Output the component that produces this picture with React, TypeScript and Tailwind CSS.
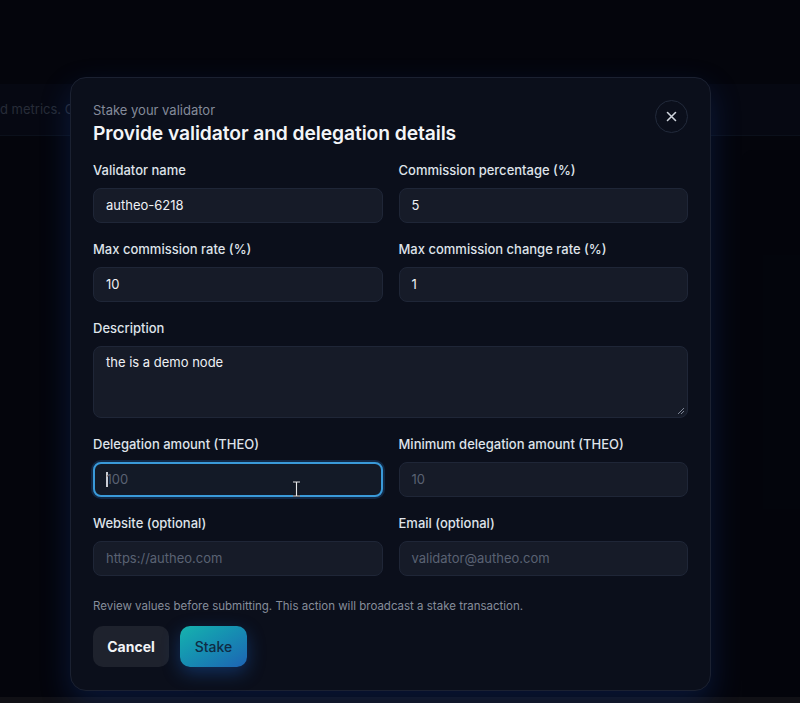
import React from "react";

function Field({
  label,
  value,
  placeholder,
  focused,
}: {
  label: string;
  value?: string;
  placeholder?: string;
  focused?: boolean;
}) {
  return (
    <div className="flex flex-col">
      <label className="mb-2 h-5 text-[13px] leading-5 font-medium text-[#dfe3ea]">{label}</label>
      <div
        className={
          focused
            ? "relative flex h-[35px] items-center rounded-[8px] border-2 border-[#3a9ad9] bg-[#131a27] px-[11px] shadow-[0_0_0_2px_rgba(40,120,200,0.25)]"
            : "flex h-[35px] items-center rounded-[8px] border border-[#1f2637] bg-[#161b28] px-3"
        }
      >
        {value ? (
          <span className="text-[13px] text-[#eef1f5]">{value}</span>
        ) : (
          <span className="flex items-center text-[13px] text-[#5a6273]">
            {focused && <span className="mr-[-1px] inline-block h-[15px] w-[1.5px] bg-[#c9ced6]" />}
            {placeholder}
          </span>
        )}
        {focused && (
          <svg
            className="absolute left-[197px] top-[17px]"
            width="9"
            height="16"
            viewBox="0 0 9 16"
          >
            <path d="M1 1h7M4.5 1v14M1 15h7" stroke="#0b0f18" strokeWidth="3" fill="none" />
            <path d="M1 1h7M4.5 1v14M1 15h7" stroke="#e6e8ec" strokeWidth="1.2" fill="none" />
          </svg>
        )}
      </div>
    </div>
  );
}

export default function App() {
  return (
    <div
      className="relative flex h-[703px] w-[800px] flex-col overflow-hidden bg-[#05070f]"
      style={{ fontFamily: "Inter, 'Noto Sans', sans-serif" }}
    >
      {/* page underneath */}
      <div className="flex flex-1 flex-col pt-[84px]">
        <div className="flex h-[52px] items-center border-b border-[#101826] bg-[#080c17]">
          <span className="whitespace-nowrap text-[13px] text-[#3b4252]">d metrics. C</span>
        </div>
        <div className="flex flex-1 pl-[742px] pt-[14px]">
          <div className="flex-1 rounded-tl-[10px] bg-[#04060d]" />
        </div>
      </div>
      <div className="h-[6px] bg-[#17181c]" />

      {/* overlay */}
      <div className="absolute inset-0 bg-[rgba(2,4,10,0.35)] pl-[70px] pt-[77px]">
        <div className="w-[641px] rounded-[16px] border border-[#1b2131] bg-[#0b0f1b] px-[22px] pb-[23px] pt-[23px] shadow-[0_12px_30px_rgba(20,70,170,0.28)]">
          <div className="relative">
            <div className="h-[18px] text-[13px] leading-[18px] text-[#848b9a]">Stake your validator</div>
            <div className="h-[28px] text-[19.3px] leading-[28px] font-semibold tracking-[-0.1px] text-[#f3f5f8]">
              Provide validator and delegation details
            </div>
            <button className="absolute right-0 top-[-1px] flex h-[33px] w-[33px] items-center justify-center rounded-full border border-[#222a3b] bg-[#0b0f1b]">
              <svg width="11" height="11" viewBox="0 0 11 11">
                <path d="M1.5 1.5l8 8M9.5 1.5l-8 8" stroke="#cfd4dc" strokeWidth="1.6" strokeLinecap="round" />
              </svg>
            </button>
          </div>

          <div className="mt-[13px] grid grid-cols-2 gap-x-4 gap-y-4">
            <Field label="Validator name" value="autheo-6218" />
            <Field label="Commission percentage (%)" value="5" />
            <Field label="Max commission rate (%)" value="10" />
            <Field label="Max commission change rate (%)" value="1" />
            <div className="col-span-2 flex flex-col">
              <label className="mb-2 h-5 text-[13px] leading-5 font-medium text-[#dfe3ea]">Description</label>
              <div className="relative h-[72px] rounded-[8px] border border-[#1f2637] bg-[#161b28] px-3 pt-[2px]">
                <span className="text-[13px] leading-5 text-[#eef1f5]">the is a demo node</span>
                <svg className="absolute bottom-[2px] right-[2px]" width="8" height="8" viewBox="0 0 8 8">
                  <path d="M7 1L1 7M7 4L4 7" stroke="#7c8494" strokeWidth="1" />
                </svg>
              </div>
            </div>
            <Field label="Delegation amount (THEO)" placeholder="100" focused />
            <Field label="Minimum delegation amount (THEO)" placeholder="10" />
            <Field label="Website (optional)" placeholder="https://autheo.com" />
            <Field label="Email (optional)" placeholder="validator@autheo.com" />
          </div>

          <p className="mt-[22px] h-4 text-[11.5px] leading-4 text-[#868d9a]">
            Review values before submitting. This action will broadcast a stake transaction.
          </p>

          <div className="mt-3 flex gap-[11px]">
            <button className="h-[41px] w-[76px] rounded-[10px] bg-[#1e222d] text-[14px] font-bold text-[#f2f4f7]">
              Cancel
            </button>
            <button className="h-[41px] w-[67px] rounded-[10px] bg-gradient-to-br from-[#17b3ad] to-[#1e63b3] text-[14px] font-medium text-[#0f2c44] shadow-[0_6px_18px_rgba(30,110,220,0.35)]">
              Stake
            </button>
          </div>
        </div>
      </div>
    </div>
  );
}
